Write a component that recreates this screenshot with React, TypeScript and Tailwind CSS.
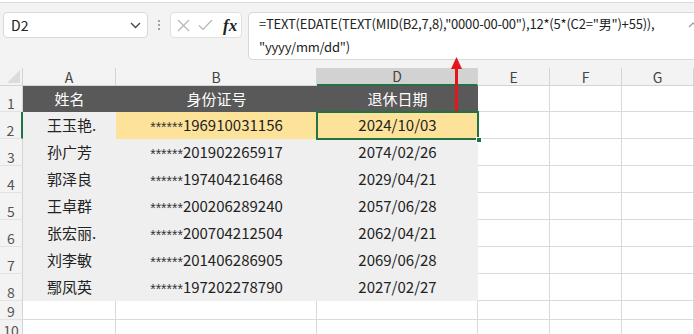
import React from "react";

const cols = [
  { key: "A", w: 93 },
  { key: "B", w: 201 },
  { key: "D", w: 161 },
  { key: "E", w: 72 },
  { key: "F", w: 72 },
  { key: "G", w: 72 },
];

const data = [
  ["王玉艳.", "196910031156", "2024/10/03"],
  ["孙广芳", "201902265917", "2074/02/26"],
  ["郭泽良", "197404216468", "2029/04/21"],
  ["王卓群", "200206289240", "2057/06/28"],
  ["张宏丽.", "200704212504", "2062/04/21"],
  ["刘李敏", "201406286905", "2069/06/28"],
  ["鄢凤英", "197202278790", "2027/02/27"],
];

const font = { fontFamily: '"Noto Sans CJK SC", "Noto Sans", sans-serif' };

const RowHead: React.FC<{ n: number; h: string; selected?: boolean }> = ({ n, h, selected }) => (
  <div
    className={`${h} w-[23px] shrink-0 flex items-end justify-center pb-[1px] text-[14px] leading-none text-[#555] bg-[#f3f3f3] border-b border-[#e2e2e2] ${
      selected ? "border-r-2 border-r-[#217346]" : "border-r border-r-[#d4d4d4]"
    }`}
  >
    {n}
  </div>
);

const App: React.FC = () => {
  return (
    <div className="w-[694px] h-[334px] overflow-hidden bg-[#f3f3f3] relative" style={font}>
      {/* top strip */}
      <div className="h-[3px] bg-white border-b border-[#dcdcdc]" />

      {/* formula bar row */}
      <div className="flex items-start pt-[9px] pl-[3px] h-[65px]">
        <div className="w-[145px] h-[26px] bg-white border border-[#d8d8d8] rounded-[4px] flex items-center justify-between pl-[7px] pr-[6px]">
          <span className="text-[14px] text-[#222]">D2</span>
          <svg width="11" height="7" viewBox="0 0 11 7" fill="none">
            <path d="M1 1l4.5 4.5L10 1" stroke="#444" strokeWidth="1.3" />
          </svg>
        </div>
        <div className="w-[22px] h-[26px] flex flex-col items-center justify-center gap-[2px]">
          <span className="w-[2px] h-[2px] rounded-full bg-[#888]" />
          <span className="w-[2px] h-[2px] rounded-full bg-[#888]" />
          <span className="w-[2px] h-[2px] rounded-full bg-[#888]" />
        </div>
        <div className="w-[72px] h-[26px] bg-white border border-[#e0e0e0] rounded-[4px] flex items-center pl-[6px] gap-[8px]">
          <svg width="13" height="13" viewBox="0 0 13 13" fill="none">
            <path d="M1 1l11 11M12 1L1 12" stroke="#b5b5b5" strokeWidth="1.2" />
          </svg>
          <svg width="15" height="12" viewBox="0 0 15 12" fill="none">
            <path d="M1 6.5l4 4L14 1" stroke="#b5b5b5" strokeWidth="1.2" />
          </svg>
          <span
            className="ml-[2px] text-[17px] italic font-bold leading-none text-[#222]"
            style={{ fontFamily: '"Liberation Serif", serif' }}
          >
            fx
          </span>
        </div>
        <div className="ml-[6px] flex-1 h-[48px] bg-white border border-[#d8d8d8] rounded-l-[5px] border-r-0 pl-[10px] relative">
          <div className="text-[13px] tracking-[-0.2px] leading-[22px] text-[#222] whitespace-nowrap">
            =TEXT(EDATE(TEXT(MID(B2,7,8),"0000-00-00"),12*(5*(C2="男")+55)),
          </div>
          <div className="text-[13px] tracking-[-0.2px] leading-[24px] text-[#222] whitespace-nowrap">
            "yyyy/mm/dd")
          </div>
          <svg className="absolute right-[-4px] top-[8px]" width="10" height="8" viewBox="0 0 10 8" fill="none">
            <path d="M1 6l4-4 4 4" stroke="#999" strokeWidth="1.2" />
          </svg>
        </div>
      </div>

      {/* sheet */}
      <div className="bg-white">
        {/* column headers */}
        <div className="flex h-[18px] bg-[#f3f3f3]">
          <div className="w-[23px] shrink-0 relative border-r border-b border-[#d4d4d4]">
            <svg className="absolute right-[2px] bottom-[2px]" width="13" height="13" viewBox="0 0 13 13">
              <path d="M13 0V13H0Z" fill="#dcdcdc" />
            </svg>
          </div>
          {cols.map((c) => (
            <div
              key={c.key}
              style={{ width: c.w }}
              className={`shrink-0 flex items-center justify-center text-[14px] leading-none text-[#444] border-r border-[#d4d4d4] ${
                c.key === "D" ? "bg-[#d2d2d2] border-b-2 border-b-[#217346]" : "border-b border-b-[#d4d4d4]"
              }`}
            >
              {c.key}
            </div>
          ))}
        </div>

        {/* row 1: table header */}
        <div className="flex h-[26px]">
          <RowHead n={1} h="h-[26px]" />
          <div className="w-[455px] shrink-0 bg-[#595959] flex text-white text-[15px]">
            <div className="w-[93px] flex items-center justify-center">姓名</div>
            <div className="w-[201px] flex items-center justify-center">身份证号</div>
            <div className="w-[161px] flex items-center justify-center">退休日期</div>
          </div>
          <div className="w-[72px] shrink-0 border-r border-b border-[#dadada]" />
          <div className="w-[72px] shrink-0 border-r border-b border-[#dadada]" />
          <div className="w-[72px] shrink-0 border-r border-b border-[#dadada]" />
        </div>

        {/* data rows */}
        {data.map((r, i) => {
          const sel = i === 0;
          return (
            <div key={i} className="flex h-[27px]">
              <RowHead n={i + 2} h="h-[27px]" selected={sel} />
              <div className="w-[93px] shrink-0 bg-[#efefef] flex items-center pl-[24px] text-[15px] text-[#222]">
                {r[0]}
              </div>
              <div
                className={`w-[201px] shrink-0 flex items-center justify-center text-[15px] text-[#222] ${
                  sel ? "bg-[#fde39a]" : "bg-[#efefef]"
                }`}
              >
                <span
                  className="text-[14px] leading-none text-[#333] mt-[3px]"
                  style={{ fontFamily: '"Liberation Sans", sans-serif' }}
                >
                  ******
                </span>
                <span>{r[1]}</span>
              </div>
              <div
                className={`w-[161px] shrink-0 flex items-center justify-center text-[15px] text-[#222] relative ${
                  sel ? "bg-[#fde39a] outline-2 outline-[#217346] -outline-offset-1 z-10" : "bg-[#efefef]"
                }`}
              >
                {r[2]}
                {sel && (
                  <span className="absolute right-[-4px] bottom-[-4px] w-[6px] h-[6px] bg-[#217346] border border-white" />
                )}
              </div>
              <div className="w-[72px] shrink-0 border-r border-b border-[#dadada] bg-white" />
              <div className="w-[72px] shrink-0 border-r border-b border-[#dadada] bg-white" />
              <div className="w-[72px] shrink-0 border-r border-b border-[#dadada] bg-white" />
            </div>
          );
        })}

        {/* empty rows */}
        {[9, 10].map((n) => (
          <div key={n} className="flex h-[19px]">
            <RowHead n={n} h="h-[19px]" />
            {cols.map((c) => (
              <div key={c.key} style={{ width: c.w }} className="shrink-0 border-r border-b border-[#dadada] bg-white" />
            ))}
          </div>
        ))}
      </div>

      {/* red arrow */}
      <svg className="absolute left-[450px] top-[57px]" width="13" height="57" viewBox="0 0 13 57">
        <path d="M6.5 0L12 12H1Z" fill="#e3161b" />
        <rect x="5" y="10" width="3" height="46" fill="#e3161b" />
      </svg>
    </div>
  );
};

export default App;
